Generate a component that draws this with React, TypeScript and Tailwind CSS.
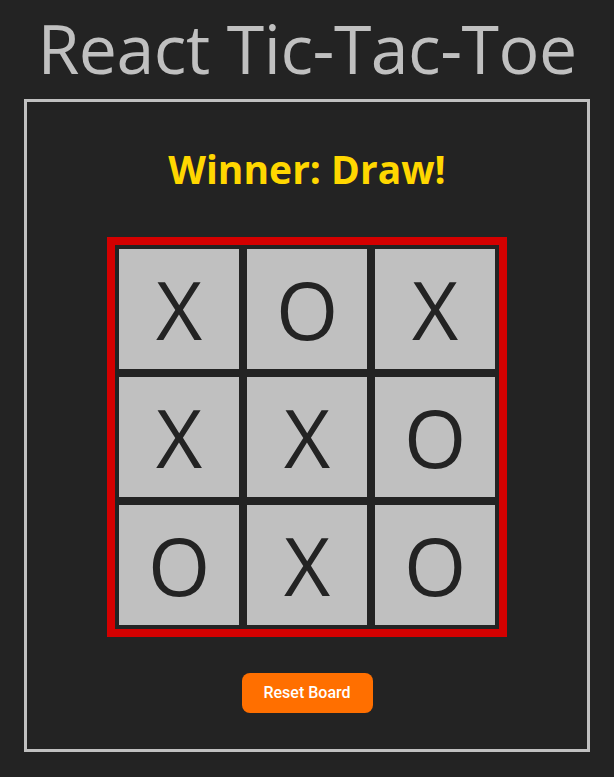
import React from "react";

const board = ["X", "O", "X", "X", "X", "O", "O", "X", "O"];

export default function App() {
  return (
    <div className="min-h-screen bg-[#232323] font-['Open_Sans',sans-serif]">
      <h1 className="flex h-[99px] items-center justify-center pb-1 text-[68px] font-normal tracking-[-0.5px] text-[#c0c0c0]">
        React Tic-Tac-Toe
      </h1>
      <div className="mx-6 flex flex-col items-center border-[3px] border-[#c0c0c0] pb-9">
        <div className="flex h-[135px] items-center justify-center text-[39px] font-bold text-[#ffd700]">
          Winner: Draw!
        </div>
        <div className="border-[8px] border-[#d40000] bg-[#232323] p-1">
          <div className="grid grid-cols-3 gap-2">
            {board.map((v, i) => (
              <div
                key={i}
                className="flex h-[120px] w-[120px] items-center justify-center bg-[#c0c0c0] text-[80px] font-normal leading-none text-[#232323]"
              >
                {v}
              </div>
            ))}
          </div>
        </div>
        <button className="mt-9 h-10 w-[131px] rounded-lg bg-[#ff6f00] font-['Roboto',sans-serif] text-base font-medium text-white">
          Reset Board
        </button>
      </div>
    </div>
  );
}
